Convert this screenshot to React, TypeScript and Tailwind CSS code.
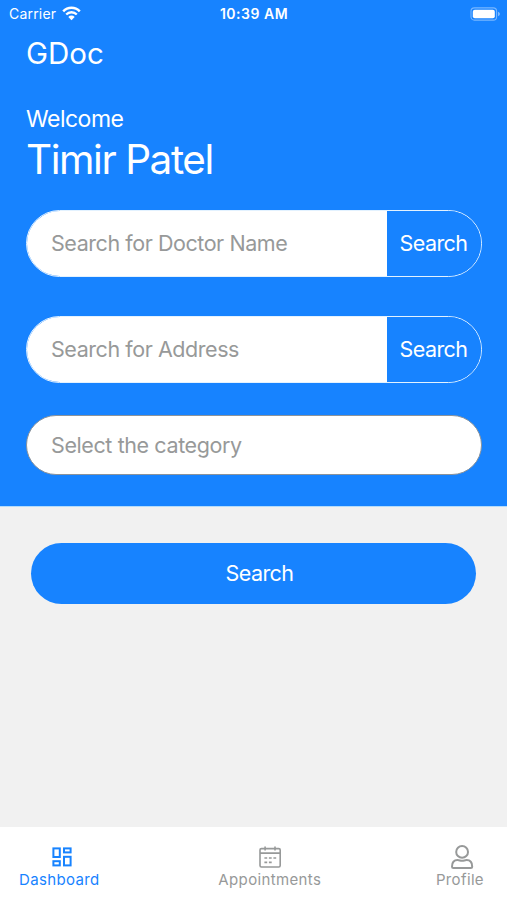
import { useState } from "react";
import type { ReactNode } from "react";

type SearchFieldProps = {
  placeholder: string;
  value: string;
  onChange: (value: string) => void;
};

const WifiIcon = () => (
  <svg width="19" height="15" viewBox="0 0 19 15" fill="none">
    <path d="M1.2 5.3a11.6 11.6 0 0 1 16.6 0" stroke="white" strokeWidth="2.5" />
    <path d="M4.2 8.5a7.4 7.4 0 0 1 10.6 0" stroke="white" strokeWidth="2.3" />
    <path d="M9.5 14.2 6.3 10.9a4.5 4.5 0 0 1 6.4 0z" fill="white" />
  </svg>
);

const BatteryIcon = () => (
  <svg width="31" height="14" viewBox="0 0 31 14" fill="none">
    <rect x="1" y="0.9" width="25.6" height="12.2" rx="3.4" stroke="white" strokeOpacity="0.42" strokeWidth="1.1" />
    <rect x="2.8" y="2.7" width="22" height="8.6" rx="2" fill="white" />
    <path d="M28 4.8c1.3.5 1.9 1.2 1.9 2.2s-.6 1.7-1.9 2.2z" fill="white" fillOpacity="0.45" />
  </svg>
);

const DashboardIcon = () => (
  <svg width="20" height="20" viewBox="0 0 20 20" fill="none" stroke="currentColor" strokeWidth="2">
    <rect x="1.4" y="1.4" width="6.4" height="8.6" />
    <rect x="12" y="1.4" width="6.6" height="4" />
    <rect x="1.4" y="14.2" width="6.4" height="4.2" />
    <rect x="12" y="9.8" width="6.6" height="8.6" />
  </svg>
);

const CalendarIcon = () => (
  <svg width="24" height="24" viewBox="0 0 24 24" fill="none" stroke="currentColor" strokeWidth="1.6">
    <rect x="2" y="3.6" width="20.2" height="18.4" rx="1.4" />
    <path d="M2 8.1h20.2M7.1 1.4v4M17 1.4v4" />
    <path d="M6.4 13h2.8M10.9 13h2.8M15.4 13h2.8M6.4 17.4h2.8M10.9 17.4h2.8" />
  </svg>
);

const ProfileIcon = () => (
  <svg width="24" height="26" viewBox="0 0 24 26" fill="none" stroke="currentColor" strokeWidth="2">
    <circle cx="12.1" cy="7.9" r="5.9" />
    <path d="M2 22.7c0-4.6 2.4-6.6 5.6-6.6 1.8 0 2.6.7 4.5.7s2.7-.7 4.5-.7c3.2 0 5.6 2 5.6 6.6 0 .9-.5 1.4-1.4 1.4H3.4c-.9 0-1.4-.5-1.4-1.4z" />
  </svg>
);

const SearchField = ({ placeholder, value, onChange }: SearchFieldProps) => (
  <div className="flex h-[67px] overflow-hidden rounded-full border border-[#e3f2ff]">
    <input
      value={value}
      onChange={(e) => onChange(e.target.value)}
      placeholder={placeholder}
      className="min-w-0 flex-1 bg-white pl-[24px] text-[21.5px] tracking-[-0.44px] text-gray-700 outline-none placeholder:text-[#979999]"
    />
    <button className="w-[94px] bg-[#1783ff] pr-px text-[21.5px] tracking-[-0.55px] text-white">
      Search
    </button>
  </div>
);

type TabProps = {
  label: string;
  icon: ReactNode;
  active: boolean;
  iconClass?: string;
  onClick: () => void;
};

const Tab = ({ label, icon, active, iconClass = "", onClick }: TabProps) => (
  <button
    onClick={onClick}
    className={`flex flex-col items-center ${active ? "text-[#1783ff]" : "text-[#979999]"}`}
  >
    <span className={`flex h-[26px] items-center justify-center ${iconClass}`}>{icon}</span>
    <span className="mt-px text-[15px] leading-[18px] tracking-[0.36px]">{label}</span>
  </button>
);

export default function App() {
  const [doctor, setDoctor] = useState("");
  const [address, setAddress] = useState("");
  const [tab, setTab] = useState("Dashboard");

  return (
    <div className="flex h-[900px] w-full flex-col bg-[#f1f1f1] font-['Inter',sans-serif]">
      {/* Header */}
      <div className="h-[507px] border-b border-[#b4dcfb] bg-[#1783ff] text-white">
        {/* Status bar */}
        <div className="grid h-[27px] grid-cols-3 items-center pr-[6px] pl-[9px]">
          <div className="flex items-center gap-[6px] text-[14px] tracking-[0.2px]">
            <span>Carrier</span>
            <WifiIcon />
          </div>
          <span className="pr-[2px] text-center text-[14px] font-semibold tracking-[0.5px]">
            10:39 AM
          </span>
          <div className="flex justify-end">
            <BatteryIcon />
          </div>
        </div>

        <div className="pr-[25px] pl-[26px]">
          <h1 className="h-[52px] text-[29.5px] leading-[52px] font-normal">GDoc</h1>
          <p className="mt-[24px] text-[23px] leading-[32px] font-normal tracking-[-0.5px]">
            Welcome
          </p>
          <h2 className="text-[40.5px] leading-[49px] font-normal tracking-[-1.45px]">
            Timir Patel
          </h2>

          <div className="mt-[26px]">
            <SearchField
              placeholder="Search for Doctor Name"
              value={doctor}
              onChange={setDoctor}
            />
          </div>
          <div className="mt-[39px]">
            <SearchField
              placeholder="Search for Address"
              value={address}
              onChange={setAddress}
            />
          </div>
          <button className="mt-[32px] flex h-[60px] w-full items-center rounded-full border border-[#8b939b] bg-white pl-[24px] text-[21.5px] tracking-[-0.4px] text-[#979999]">
            Select the category
          </button>
        </div>
      </div>

      <div className="flex-1 pt-[36px] pr-[31px] pl-[31px]">
        <button className="h-[61px] w-full rounded-full bg-[#1783ff] pl-[12px] text-[21.5px] tracking-[-0.55px] text-white">
          Search
        </button>
      </div>

      {/* Bottom tabs */}
      <div className="flex h-[73px] items-start justify-between bg-white pt-[17px] pr-[23px] pl-[19px]">
        <Tab
          label="Dashboard"
          icon={<DashboardIcon />}
          active={tab === "Dashboard"}
          iconClass="pl-[5px]"
          onClick={() => setTab("Dashboard")}
        />
        <div className="pl-[4px]">
          <Tab
            label="Appointments"
            icon={<CalendarIcon />}
            active={tab === "Appointments"}
            onClick={() => setTab("Appointments")}
          />
        </div>
        <Tab
          label="Profile"
          icon={<ProfileIcon />}
          active={tab === "Profile"}
          iconClass="pl-[4px]"
          onClick={() => setTab("Profile")}
        />
      </div>
    </div>
  );
}
